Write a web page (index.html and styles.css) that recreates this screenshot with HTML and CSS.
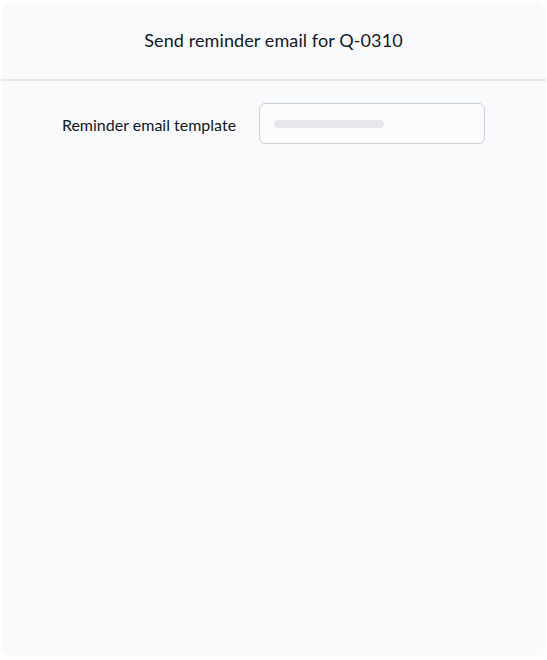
FILE: index.html
```html
<!DOCTYPE html>
<html lang="en">
<head>
<meta charset="utf-8">
<title>Send reminder email</title>
<link rel="stylesheet" href="styles.css">
</head>
<body>
<div class="card">
  <header class="card-header">
    <h1 class="title">Send reminder email for Q-0310</h1>
  </header>
  <div class="card-body">
    <div class="form-row">
      <label class="label">Reminder email template</label>
      <div class="select">
        <span class="skeleton"></span>
      </div>
    </div>
  </div>
</div>
</body>
</html>
```
FILE: styles.css
```css
html, body {
  margin: 0;
  padding: 0;
  background: #ffffff;
}
body {
  padding: 1px;
  box-sizing: border-box;
  height: 660px;
  font-family: Lato, "Noto Sans", sans-serif;
  color: #111827;
}
.card {
  height: 658px;
  background: #f9fafb;
  border-radius: 14px;
  display: flex;
  flex-direction: column;
}
.card-header {
  height: 78px;
  border-bottom: 2px solid #e5e7eb;
  display: flex;
  align-items: center;
  justify-content: center;
}
.title {
  margin: 0;
  font-size: 18px;
  font-weight: 400;
  letter-spacing: 0.1px;
}
.card-body {
  padding-top: 22px;
}
.form-row {
  display: flex;
  align-items: center;
  justify-content: center;
  gap: 23px;
}
.label {
  font-size: 16px;
  padding-top: 2px;
}
.select {
  width: 210px;
  height: 39px;
  border: 1px solid #c9ced9;
  border-radius: 6px;
  background: #fcfcfd;
  display: flex;
  align-items: center;
  padding-left: 14px;
  box-sizing: content-box;
}
.skeleton {
  width: 110px;
  height: 8px;
  border-radius: 4px;
  background: #e5e7eb;
}
```
